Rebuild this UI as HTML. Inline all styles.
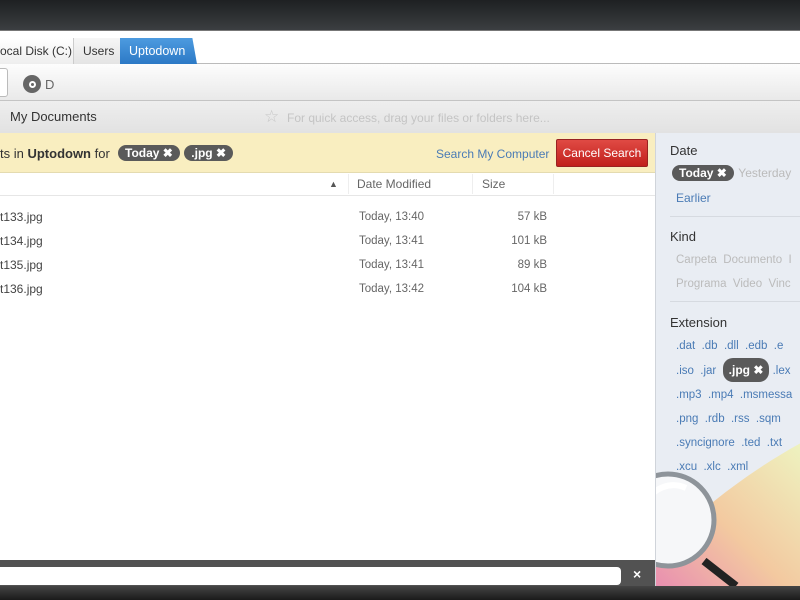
<!DOCTYPE html>
<html><head><style>
*{margin:0;padding:0;box-sizing:border-box}
body{width:800px;height:600px;overflow:hidden;background:#222;font-family:"Liberation Sans",sans-serif;position:relative}
.a{position:absolute}
.t{font-size:12px;color:#333;white-space:nowrap}
.pill{display:inline-block;background:#5a5a5a;color:#fff;border-radius:10px;padding:1px 7px;font-size:12px;font-weight:bold}
.bl{color:#4a7bb5}
.gr{color:#bbb}
</style></head><body>
<div class="a" style="left:0;top:0;width:800px;height:31px;background:linear-gradient(#1e2022,#3b3e41);border-bottom:1px solid #777"></div>
<div class="a" style="left:0;top:31px;width:800px;height:33px;background:#fff;border-bottom:1px solid #bbb"></div>
<div class="a t" style="left:0;top:38px;width:74px;height:26px;background:linear-gradient(#fff,#eee);border-right:1px solid #ccc;padding:6px 0 0 0;font-size:12px">ocal Disk (C:)</div>
<div class="a t" style="left:74px;top:38px;width:46px;height:26px;background:linear-gradient(#f6f6f6,#e4e4e4);padding:6px 0 0 9px;font-size:12px">Users</div>
<div class="a t" style="left:120px;top:38px;width:77px;height:26px;background:linear-gradient(#4d9be0,#2c79c6);color:#fff;padding:6px 0 0 9px;font-size:12.5px;clip-path:polygon(0 0,94% 0,100% 100%,0 100%)">Uptodown</div>
<div class="a" style="left:0;top:64px;width:800px;height:37px;background:linear-gradient(#fdfdfd,#e9e9e9);border-bottom:1px solid #c4c4c4"></div>
<div class="a" style="left:-4px;top:68px;width:12px;height:29px;background:#fff;border:1px solid #bbb;border-radius:3px"></div>
<div class="a" style="left:23px;top:75px;width:18px;height:18px;border-radius:50%;background:#666"><div class="a" style="left:6px;top:6px;width:7px;height:7px;border-radius:50%;border:2px solid #fff"></div></div>
<div class="a t" style="left:45px;top:77px;color:#666;font-size:13px">D</div>
<div class="a" style="left:0;top:101px;width:800px;height:32px;background:linear-gradient(#eee,#e2e2e2)"></div>
<div class="a t" style="left:10px;top:109px;font-size:13px">My Documents</div>
<div class="a" style="left:264px;top:107px;font-size:17px;color:#c8c8c8">☆</div>
<div class="a t" style="left:287px;top:111px;color:#c4c4c4;font-size:12px">For quick access, drag your files or folders here...</div>
<div class="a" style="left:0;top:133px;width:655px;height:40px;background:#f9eec0;border-bottom:1px solid #e4dbb0"></div>
<div class="a t" style="left:0;top:146px;font-size:13px">ts in <b>Uptodown</b> for</div>
<div class="a" style="left:118px;top:144px"><span class="pill">Today ✖</span> <span class="pill">.jpg ✖</span></div>
<div class="a t bl" style="left:436px;top:147px">Search My Computer</div>
<div class="a" style="left:556px;top:139px;width:92px;height:28px;background:linear-gradient(#e04a44,#c1201c);border:1px solid #922;border-radius:2px;color:#fff;font-size:12px;text-align:center;line-height:26px">Cancel Search</div>
<div class="a" style="left:0;top:173px;width:655px;height:387px;background:#fff"></div>
<div class="a" style="left:0;top:195px;width:655px;height:1px;background:#e6e6e6"></div>
<div class="a" style="left:329px;top:179px;font-size:9px;color:#555">▲</div>
<div class="a" style="left:348px;top:174px;width:1px;height:20px;background:#eee"></div>
<div class="a" style="left:472px;top:174px;width:1px;height:20px;background:#eee"></div>
<div class="a" style="left:553px;top:174px;width:1px;height:20px;background:#eee"></div>
<div class="a t" style="left:357px;top:177px;color:#666">Date Modified</div>
<div class="a t" style="left:482px;top:177px;color:#666">Size</div>
<div class="a t" style="left:0;top:205px;line-height:24px;color:#444">t133.jpg<br>t134.jpg<br>t135.jpg<br>t136.jpg</div>
<div class="a t" style="left:359px;top:205px;line-height:24px;color:#666;font-size:11.5px">Today, 13:40<br>Today, 13:41<br>Today, 13:41<br>Today, 13:42</div>
<div class="a t" style="left:490px;top:205px;width:57px;text-align:right;line-height:24px;color:#666;font-size:11.5px">57 kB<br>101 kB<br>89 kB<br>104 kB</div>
<div class="a" style="left:0;top:560px;width:655px;height:26px;background:#525252"></div>
<div class="a" style="left:-5px;top:567px;width:626px;height:18px;background:#fff;border-radius:4px"></div>
<div class="a" style="left:633px;top:566px;color:#fff;font-size:14px;font-weight:bold">×</div>
<div class="a" style="left:655px;top:133px;width:145px;height:453px;background:#e9edf3;border-left:1px solid #d0d4da;overflow:hidden">
<svg class="a" style="left:0;top:300px" width="145" height="153"><defs><linearGradient id="g" x1="0" y1="1" x2="1" y2="0"><stop offset="0" stop-color="#e98fb0"/><stop offset=".45" stop-color="#f3c9a0"/><stop offset="1" stop-color="#eef3c0"/></linearGradient></defs>
<path d="M0 153 L0 120 C40 80 90 40 145 10 L145 153 Z" fill="url(#g)"/>
<line x1="48" y1="128" x2="80" y2="153" stroke="#222" stroke-width="8"/>
<circle cx="12" cy="87" r="46" fill="#f6f7f9" stroke="#8e949a" stroke-width="5"/>
<path d="M-10 70 A30 30 0 0 1 30 55" stroke="#fff" stroke-width="6" fill="none"/>
</svg>
<div class="a t" style="left:14px;top:10px;font-size:13px;color:#333">Date</div>
<div class="a" style="left:16px;top:31px"><span class="pill">Today ✖</span> <span class="gr" style="font-size:12px">Yesterday</span></div>
<div class="a t bl" style="left:20px;top:58px">Earlier</div>
<div class="a" style="left:14px;top:83px;width:131px;height:1px;background:#d6dae0"></div>
<div class="a t" style="left:14px;top:96px;font-size:13px">Kind</div>
<div class="a t gr" style="left:20px;top:115px;line-height:24px;font-size:11.5px">Carpeta &nbsp;Documento &nbsp;I<br>Programa &nbsp;Video &nbsp;Vinc</div>
<div class="a" style="left:14px;top:168px;width:131px;height:1px;background:#d6dae0"></div>
<div class="a t" style="left:14px;top:182px;font-size:13px">Extension</div>
<div class="a t bl" style="left:20px;top:201px;line-height:24px;font-size:11.5px">.dat &nbsp;.db &nbsp;.dll &nbsp;.edb &nbsp;.e<br>.iso &nbsp;.jar &nbsp;<span class="pill" style="padding:0 6px">.jpg ✖</span> .lex<br>.mp3 &nbsp;.mp4 &nbsp;.msmessa<br>.png &nbsp;.rdb &nbsp;.rss &nbsp;.sqm<br>.syncignore &nbsp;.ted &nbsp;.txt<br>.xcu &nbsp;.xlc &nbsp;.xml</div>
</div>
<div class="a" style="left:0;top:586px;width:800px;height:14px;background:linear-gradient(#444,#1a1a1a)"></div>
</body></html>
